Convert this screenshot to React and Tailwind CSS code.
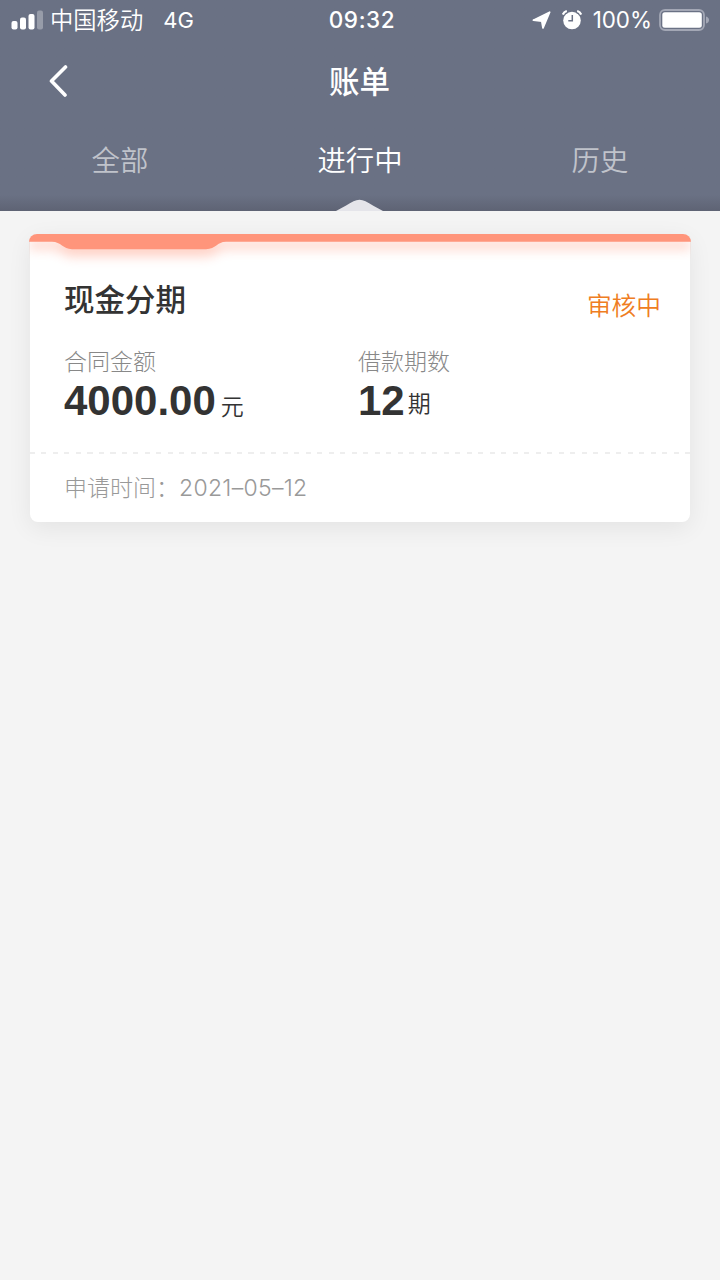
import React, { useState } from "react";
import clsx from "clsx";

const tabs = [
  { id: "all", label: "全部" },
  { id: "ongoing", label: "进行中" },
  { id: "history", label: "历史" },
];

const bills = [
  {
    id: 1,
    name: "现金分期",
    status: "审核中",
    amount: "4000.00",
    periods: "12",
    appliedAt: "2021–05–12",
  },
];

const StatusBar = () => (
  <div className="flex h-10 items-center justify-between pl-[11px] pr-[11px] text-[23.3px] leading-10">
    <div className="flex w-[240px] items-center">
      <svg width="32" height="20" viewBox="0 0 32 20" fill="currentColor">
        <rect x="0.5" y="11" width="6" height="8.5" rx="2" />
        <rect x="9" y="7.5" width="6" height="12" rx="2" />
        <rect x="17.5" y="4" width="6" height="15.5" rx="2" />
        <rect x="26" y="0.5" width="6" height="19" rx="2" opacity="0.3" />
      </svg>
      <span className="ml-[7px] pt-0.5 font-[350]">中国移动</span>
      <span className="ml-[20px] text-[22px]">4G</span>
    </div>
    <span className="ml-1 text-[22.5px] font-medium tracking-[0.6px]">09:32</span>
    <div className="flex w-[240px] items-center justify-end">
      {/* Location arrow */}
      <svg width="19" height="18" viewBox="0 0 19 18" fill="currentColor">
        <path
          d="M17.6 1.2 L11 16.8 L9.8 10 L1.4 9.2 Z"
          stroke="currentColor"
          strokeWidth="1.8"
          strokeLinejoin="round"
        />
      </svg>
      {/* Alarm clock */}
      <svg className="ml-[11px]" width="20" height="20" viewBox="0 0 20 20">
        <circle cx="10" cy="10.5" r="8.8" fill="white" />
        <path
          d="M10.3 5 V10.8 H6.3"
          fill="none"
          stroke="#6a7184"
          strokeWidth="1.5"
        />
        <path
          d="M1.2 4.8 Q2 2 5 1.2 M18.8 4.8 Q18 2 15 1.2"
          fill="none"
          stroke="#6a7184"
          strokeWidth="4"
        />
        <path
          d="M0.9 4.6 Q1.8 1.8 4.8 1 M19.1 4.6 Q18.2 1.8 15.2 1"
          fill="none"
          stroke="white"
          strokeWidth="2.2"
        />
      </svg>
      <span className="ml-[11px] text-[22.4px]">100%</span>
      <svg className="ml-[7px]" width="50" height="22" viewBox="0 0 50 22">
        <rect
          x="1"
          y="1"
          width="44"
          height="20"
          rx="5"
          fill="none"
          stroke="#a3a7b5"
          strokeWidth="1.8"
        />
        <rect x="3.3" y="3.3" width="39.5" height="15.4" rx="2.5" fill="white" />
        <path d="M47 7.5 Q50 8.5 50 11 Q50 13.5 47 14.5 Z" fill="#a3a7b5" />
      </svg>
    </div>
  </div>
);

const Header = ({ active, onChange }) => (
  <header className="h-[211px] bg-[#6a7184] bg-linear-to-t from-[#5e6374] to-[#6a7184] to-[16px] text-white">
    <StatusBar />
    <div className="flex h-[82px] items-center px-[49px]">
      <button type="button" aria-label="返回" className="w-10">
        <svg width="19" height="32" viewBox="0 0 19 32" fill="none">
          <path
            d="M16.5 2 L2.5 16 L16 30"
            stroke="currentColor"
            strokeWidth="3.6"
            strokeLinecap="round"
            strokeLinejoin="round"
          />
        </svg>
      </button>
      <h1 className="flex-1 pt-px pr-px text-center text-[30.5px] font-medium">账单</h1>
      <div className="w-10" />
    </div>
    <nav className="flex h-[89px]">
      {tabs.map((tab) => (
        <button
          key={tab.id}
          type="button"
          onClick={() => onChange(tab.id)}
          className={clsx(
            "flex flex-1 flex-col items-center justify-between pt-[17px] text-[28.4px] font-[350] leading-11",
            active === tab.id ? "text-white" : "text-[#c0c3cb]"
          )}
        >
          {tab.label}
          {active === tab.id && (
            <svg width="50" height="12" viewBox="0 0 50 12">
              <path
                d="M1 12 C8 8.5 14 4.5 18.5 2.2 Q24.5 -0.8 30.5 2.2 C35 4.5 41 8.5 48 12 Z"
                fill="#e5e5ea"
              />
            </svg>
          )}
        </button>
      ))}
    </nav>
  </header>
);

const BillCard = ({ bill }) => (
  <section className="relative h-[288px] text-[#333333]">
    {/* Coral strip with the hanging tab */}
    <svg
      className="absolute left-[-1px] top-0 rounded-t-lg"
      width="662"
      height="44"
      viewBox="0 0 662 44"
    >
      <path
        d="M0 0 H662 V7.8 H197 C188 7.8 187 15.2 177 15.2 H43 C34 15.2 32 7.8 23 7.8 H0 Z"
        fill="#ff957b"
        style={{ filter: "drop-shadow(0 7px 6px rgba(255,149,123,0.45))" }}
      />
    </svg>
    <div className="flex h-[218px] flex-col px-[34px] pt-[44px]">
      <div className="flex justify-between">
        <h2 className="text-[30.5px] font-medium leading-11">{bill.name}</h2>
        <span className="mr-[-5px] mt-[6px] text-[24.7px] font-[350] leading-11 text-[#ef7d22]">
          {bill.status}
        </span>
      </div>
      <div className="mt-[18px] flex">
        <div className="w-[294px]">
          <p className="text-[23px] font-light leading-8 text-[#888888]">合同金额</p>
          <p className="flex items-baseline leading-[46px]">
            <span className="font-['Liberation_Sans',sans-serif] text-[42px] font-bold">
              {bill.amount}
            </span>
            <span className="ml-[5px] text-[23px] font-[350]">元</span>
          </p>
        </div>
        <div>
          <p className="text-[23px] font-light leading-8 text-[#888888]">借款期数</p>
          <p className="flex items-baseline leading-[46px]">
            <span className="font-['Liberation_Sans',sans-serif] text-[42px] font-bold">
              {bill.periods}
            </span>
            <span className="mb-px ml-[3px] self-end text-[23px] font-[350] leading-[38px]">
              期
            </span>
          </p>
        </div>
      </div>
    </div>
    <div className="h-[2px] bg-[repeating-linear-gradient(90deg,#eeeeee_0_5px,transparent_5px_11.5px)]" />
    <p className="flex px-[34px] text-[23px] font-light leading-[69px] text-[#999999]">
      <span>申请时间：</span>
      <span className="tracking-[0.3px]">{bill.appliedAt}</span>
    </p>
  </section>
);

const App = () => {
  const [active, setActive] = useState("ongoing");

  return (
    <div className="min-h-screen bg-[#f4f4f4] font-['Inter','Noto_Sans_CJK_SC',sans-serif]">
      <Header active={active} onChange={setActive} />
      <main className="px-[30px] pt-[23px]">
        {bills.map((bill) => (
          <div
            key={bill.id}
            className="rounded-lg bg-white shadow-[0_6px_24px_rgba(0,0,0,0.07)]"
          >
            <BillCard bill={bill} />
          </div>
        ))}
      </main>
    </div>
  );
};

export default App;
